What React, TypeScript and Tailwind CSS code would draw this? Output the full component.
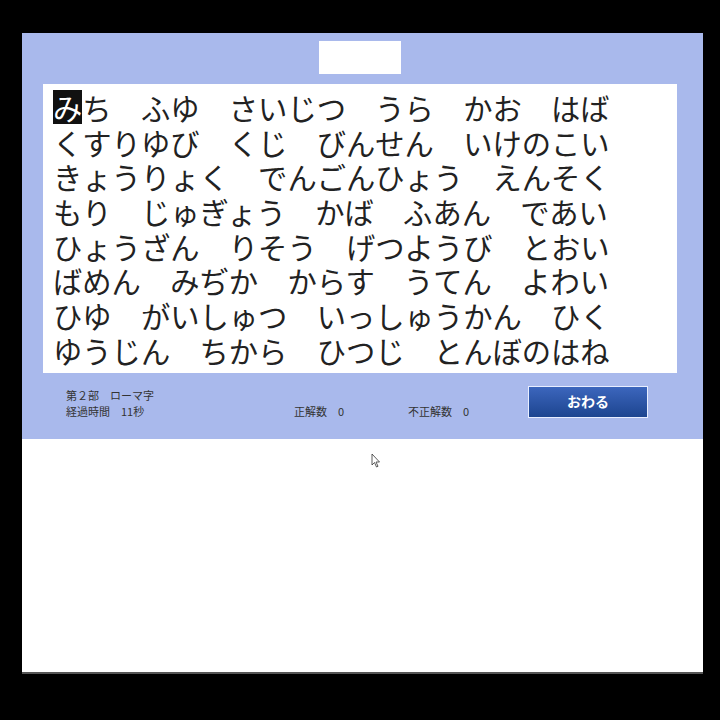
const lines = [
  'みち　ふゆ　さいじつ　うら　かお　はば',
  'くすりゆび　くじ　びんせん　いけのこい',
  'きょうりょく　でんごんひょう　えんそく',
  'もり　じゅぎょう　かば　ふあん　であい',
  'ひょうざん　りそう　げつようび　とおい',
  'ばめん　みぢか　からす　うてん　よわい',
  'ひゆ　がいしゅつ　いっしゅうかん　ひく',
  'ゆうじん　ちから　ひつじ　とんぼのはね',
];

const jp = { fontFamily: '"Noto Sans CJK JP", "Noto Sans", sans-serif' };

const App = () => {
  return (
    <div className="w-[720px] h-[720px] bg-black pt-[33px] pl-[22px] relative" style={jp}>
      <div className="w-[681px] h-[641px] bg-white border-b-2 border-[#555]">
        {/* Blue game panel */}
        <div className="h-[406px] bg-[#a9b9ec] pt-[8px]">
          <div className="ml-[297px] w-[82px] h-[33px] bg-white"></div>

          {/* Word list */}
          <div className="mt-[10px] ml-[21px] w-[634px] h-[289px] bg-white pl-[10px] pt-[6px] text-[29.3px] leading-[34.7px] text-[#222] whitespace-nowrap">
            {lines.map((line, i) => (
              <div key={i} className="h-[34.7px]">
                {i === 0 ? (
                  <>
                    <span className="inline-block h-[34px] leading-[34px] bg-[#111] text-white align-top">み</span>
                    {line.slice(1)}
                  </>
                ) : (
                  line
                )}
              </div>
            ))}
          </div>

          {/* Footer */}
          <div className="flex items-start mt-[13px] text-[11px] leading-[16px] text-[#333]">
            <div className="ml-[44px] w-[228px] pt-[1px]">
              <div>第２部　ローマ字</div>
              <div>経過時間　11秒</div>
            </div>
            <div className="w-[114px] pt-[17px]">正解数　0</div>
            <div className="w-[120px] pt-[17px]">不正解数　0</div>
            <button className="w-[120px] h-[32px] border border-[#e8eeff] bg-gradient-to-b from-[#3c66bd] to-[#1d4590] text-white text-[14px] font-bold leading-none pb-[2px]">
              おわる
            </button>
          </div>
        </div>
      </div>

      {/* mouse cursor */}
      <svg className="absolute left-[371px] top-[453px]" width="10" height="15" viewBox="0 0 10 15">
        <path d="M1 1 L1 12 L3.5 9.5 L5.5 14 L7 13.3 L5 9 L8.5 9 Z" fill="white" stroke="#333" strokeWidth="0.8" />
      </svg>
    </div>
  );
};

export default App;
